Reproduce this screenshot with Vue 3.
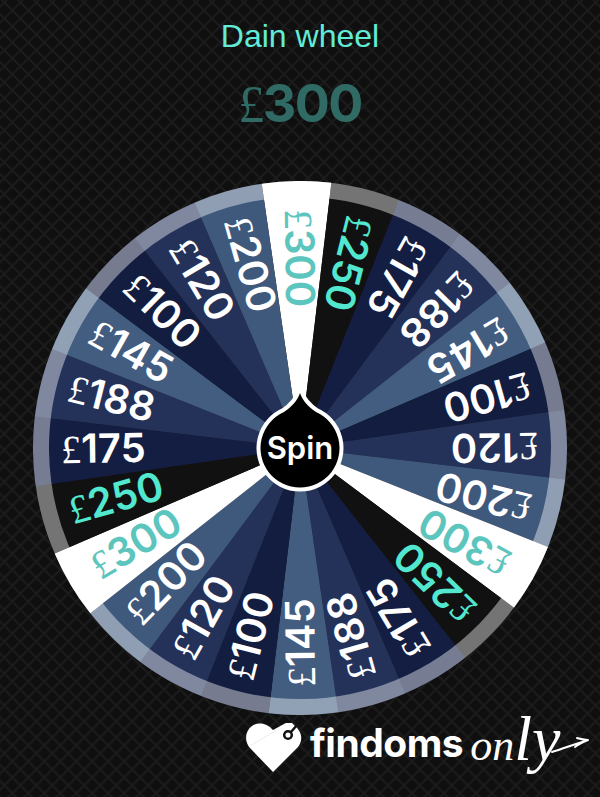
<template>
  <div class="page">
    <h1 class="title">Dain wheel</h1>
    <div class="amount"><span class="pound">£</span>300</div>

    <svg class="wheel" viewBox="-267 -267 534 534" width="534" height="534">
      <g transform="rotate(-0.75)">
        <path v-for="s in segments" :key="s.id" :d="s.d" :fill="s.fill" />
        <circle r="259" fill="none" stroke="#fff" stroke-opacity="0.42" stroke-width="16" />
        <g v-for="s in segments" :key="'t' + s.id" :transform="`rotate(${s.angle})`">
          <text class="prize" transform="rotate(90)" x="-239" y="12" :fill="s.color">
            <tspan class="prize-pound">£</tspan>{{ s.value }}
          </text>
        </g>
      </g>
      <path class="knob" d="M0 -55C2 -49 6 -43 16 -36A39.5 39.5 0 1 1 -16 -36C-6 -43 -2 -49 0 -55Z" />
      <text class="spin" y="11" text-anchor="middle">Spin</text>
    </svg>

    <div class="logo">
      <svg class="heart" viewBox="0 0 56 50" width="56" height="50">
        <path
          fill="#fff"
          d="M27 49L4 25C-2 18 -1 8 6 3C13 -2 22 1 27 7L38 1C41 -1 44 -1 46 0L49 3C55 8 58 16 52 24Z"
        />
        <path d="M30.6 7L5.6 22" stroke="#ddd" stroke-width="0.6" />
        <path d="M45 9L51 2" stroke="#111" stroke-width="2.5" />
        <circle cx="42" cy="12" r="3.8" fill="#fff" stroke="#111" stroke-width="2.5" />
      </svg>
      <span class="logo-name">findoms</span>
      <span class="logo-script">on<span class="logo-tall">ly</span></span>
      <svg class="arrow" viewBox="0 0 40 30" width="40" height="30">
        <path
          d="M2 20C12 17 25 12 38 8M27 6C31 7 34 8 38 8C34 10 29 12 25 15"
          fill="none"
          stroke="#fff"
          stroke-width="2"
          stroke-linecap="round"
          stroke-linejoin="round"
        />
      </svg>
    </div>
  </div>
</template>

<script setup>
const values = [300, 250, 175, 188, 145, 100, 120, 200]
const fills = {
  300: '#ffffff',
  250: '#111111',
  175: '#141e42',
  188: '#24325a',
  145: '#425d80',
  100: '#131d40',
  120: '#24325a',
  200: '#3f597c'
}
const colors = { 300: '#5cc5bd', 250: '#52e8d0' }
const R = 267
const step = 15

const point = (deg) => {
  const rad = (deg * Math.PI) / 180
  return `${(R * Math.sin(rad)).toFixed(2)} ${(-R * Math.cos(rad)).toFixed(2)}`
}

const segments = Array.from({ length: 24 }, (_, i) => {
  const value = values[i % values.length]
  const angle = i * step
  return {
    id: i,
    value,
    angle,
    fill: fills[value],
    color: colors[value] || '#ffffff',
    d: `M0 0L${point(angle - step / 2)}A${R} ${R} 0 0 1 ${point(angle + step / 2)}Z`
  }
})
</script>

<style scoped>
.page {
  width: 600px;
  height: 797px;
  overflow: hidden;
  display: flex;
  flex-direction: column;
  align-items: center;
  background-color: #0f0f0f;
  background-image:
    repeating-linear-gradient(45deg, #1e1e1e 0, #0f0f0f 1.8px, #0f0f0f 9.5px, #1e1e1e 11.3px),
    repeating-linear-gradient(-45deg, #1e1e1e 0, #0f0f0f 1.8px, #0f0f0f 9.5px, #1e1e1e 11.3px);
  background-blend-mode: lighten;
}

.title {
  margin: 18px 0 0;
  font: 400 32px/36px "Liberation Sans", Arial, sans-serif;
  color: #62ecd8;
}

.amount {
  margin-top: 22px;
  height: 56px;
  font: 700 52px/56px Inter, sans-serif;
  letter-spacing: -1.5px;
  color: #2f6b64;
}

.amount .pound {
  font-family: "Liberation Serif", serif;
  font-weight: 400;
}

.wheel {
  display: block;
  margin-top: 49px;
  flex: none;
}

.prize {
  font: 600 40px Inter, sans-serif;
}

.prize-pound {
  font-family: "Liberation Serif", serif;
  font-weight: 400;
}

.knob {
  fill: #000;
  stroke: #fff;
  stroke-width: 8;
  stroke-linejoin: round;
  paint-order: stroke;
}

.spin {
  font: 600 31px Inter, sans-serif;
  fill: #fff;
}

.logo {
  align-self: flex-start;
  margin: 6px 0 0 246px;
  display: flex;
  align-items: flex-start;
  width: 354px;
}

.heart {
  flex: none;
  margin-top: 2px;
}

.logo-name {
  margin: -1px 0 0 8px;
  font: 700 39px/46px Inter, sans-serif;
  color: #fff;
  letter-spacing: -0.5px;
}

.logo-script {
  margin: -14px 0 0 7px;
  font: italic 400 44px/64px "Liberation Serif", serif;
  color: #fff;
}

.logo-tall {
  font-size: 64px;
}

.arrow {
  flex: none;
  margin: 11px 0 0 -10px;
}
</style>
